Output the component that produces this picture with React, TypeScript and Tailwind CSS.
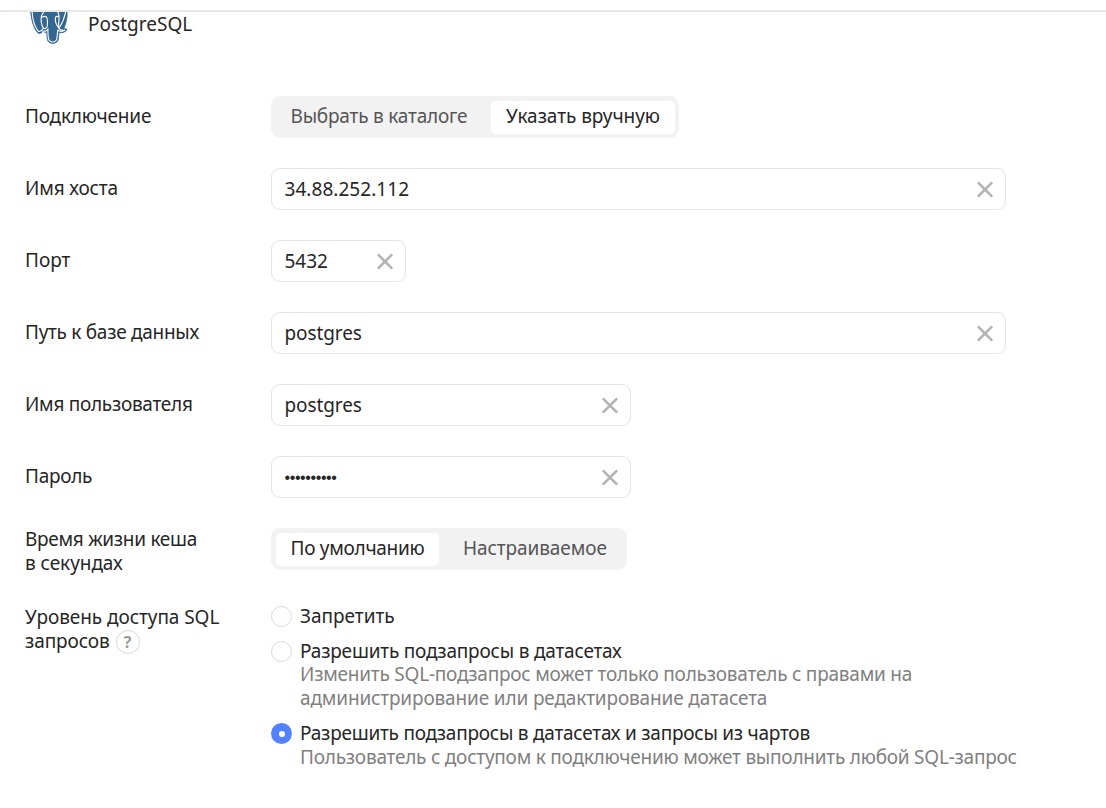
import type { ReactNode } from "react";

function PostgresLogo() {
  return (
    <svg className="block h-[33px] w-[40px] shrink-0" viewBox="0 0 40 33" fill="none" strokeLinecap="round" strokeLinejoin="round">
      <path
        d="M1.8 0C2.2 7 4.6 15.5 7.8 19.8C9.8 22.4 12.2 21.5 13.8 19.5L17.8 20.6C17.9 24 18 27.2 19.2 29.4C21 32.1 27 31.9 28.6 29C29.8 26.8 29.8 23.8 29.8 20.6C32.6 21.2 36.4 20.2 37.8 18C38.2 16.8 36.6 16.6 34.6 16.7C36.8 12.2 38.6 5.5 38 0Z"
        fill="#336791"
        stroke="#336791"
        strokeWidth="0.9"
      />
      <g stroke="#ffffff" strokeWidth="1.1">
        <path d="M3.1 0C3.6 6.8 5.8 14.6 8.6 18.4C10 20.3 11.4 19.5 12.7 18L14.4 16" />
        <path d="M14.6 0C12 3.2 11.8 6 12.2 9.8C12.5 12.8 12.7 14.2 14.6 16.1C16.4 17.7 18.4 15.8 18.4 12.8C18.3 9.8 19 7.4 17.6 5.2C16.6 3.8 14.6 4.4 12.4 5.6" />
        <path d="M12.2 18.6C14.6 19.8 18.4 19.4 19 16.8C18.8 21.6 19 26 20.2 28.4C21.8 30.6 26.2 30.4 27.4 28C28.6 25.3 28 20.5 28.9 17.8C29.8 19.8 33.5 19.8 36 18.1C33.3 18.6 30.9 18.3 30 16.2C32.7 12.2 35.4 6 36.7 0" />
        <path d="M28.8 0C30.6 3.4 30.2 6.8 29.8 9.4C29.4 12 29.6 14.2 30 16.2C27.8 13.4 25.6 9 26.6 5.2C27.5 4 28.8 4.4 30 5.2" />
      </g>
    </svg>
  );
}

function Row({ label, children }: { label: ReactNode; children: ReactNode }) {
  return (
    <div className="flex h-[42px] items-start">
      <div className="w-[246px] shrink-0 whitespace-nowrap">{label}</div>
      {children}
    </div>
  );
}

function Label({ children, className = "" }: { children: ReactNode; className?: string }) {
  return <div className={`pt-2 ${className}`}>{children}</div>;
}

function Field({ value, width, className = "" }: { value: string; width: string; className?: string }) {
  return (
    <div className={`flex h-[42px] items-center justify-between rounded-[9px] border border-[#e5e5e5] pr-[11px] pl-[12.5px] ${width}`}>
      <span className={className}>{value}</span>
      <svg className="h-[17px] w-[17px]" viewBox="0 0 17 17" fill="none" stroke="#b3b3b3" strokeWidth="2.6" strokeLinecap="round">
        <path d="M1.6 2.1 14.4 14.9M14.4 2.1 1.6 14.9" />
      </svg>
    </div>
  );
}

function Segment({ children, active, className }: { children: ReactNode; active?: boolean; className: string }) {
  return (
    <span
      className={`flex h-[33px] shrink-0 items-center rounded-[5px] pb-0.5 ${active ? "bg-white text-[#262626]" : "text-[#555555]"} ${className}`}
    >
      {children}
    </span>
  );
}

function Radio({ checked }: { checked?: boolean }) {
  return checked ? (
    <span className="mt-[2px] flex size-[21px] shrink-0 items-center justify-center rounded-full bg-[#5282ff]">
      <span className="size-[6px] rounded-full bg-white" />
    </span>
  ) : (
    <span className="mt-[2px] size-[21px] shrink-0 rounded-full border border-[#d9d9d9]" />
  );
}

export default function App() {
  return (
    <div className="h-[808px] w-[1106px] overflow-hidden bg-white font-['Noto_Sans','Open_Sans',sans-serif] text-[19px] leading-6 whitespace-nowrap text-[#262626]">
      <div className="h-3 border-b-2 border-[#e8e8e8]" />
      <header className="flex h-[84px] items-start pl-[29px]">
        <PostgresLogo />
        <h1 className="ml-[19px] tracking-[0.02px]">PostgreSQL</h1>
      </header>

      <main className="flex flex-col gap-[30px] pl-[25px]">
        <Row label={<Label className="tracking-[-0.2px]">Подключение</Label>}>
          <div className="flex h-[42px] w-[408px] items-center rounded-[9px] bg-[#f2f2f2] pl-[5px]">
            <Segment className="w-[215px] pl-[14.5px] tracking-[-0.2px]">Выбрать в каталоге</Segment>
            <Segment active className="w-[184px] pl-[15px] tracking-[-0.05px]">Указать вручную</Segment>
          </div>
        </Row>
        <Row label={<Label className="tracking-[-0.15px]">Имя хоста</Label>}>
          <Field value="34.88.252.112" width="w-[735px]" className="tracking-[0.05px]" />
        </Row>
        <Row label={<Label>Порт</Label>}>
          <Field value="5432" width="w-[135px]" />
        </Row>
        <Row label={<Label className="tracking-[-0.28px]">Путь к базе данных</Label>}>
          <Field value="postgres" width="w-[735px]" className="tracking-[-0.1px]" />
        </Row>
        <Row label={<Label className="tracking-[-0.28px]">Имя пользователя</Label>}>
          <Field value="postgres" width="w-[360px]" className="tracking-[-0.1px]" />
        </Row>
        <Row label={<Label className="tracking-[-0.3px]">Пароль</Label>}>
          <Field
            value="••••••••••"
            width="w-[360px]"
            className="pt-0.5 font-['Liberation_Sans',sans-serif] text-[16px] tracking-[-0.4px]"
          />
        </Row>
        <Row
          label={
            <div className="-mt-px">
              <div className="tracking-[-0.28px]">Время жизни кеша</div>
              <div className="tracking-[-0.05px]">в секундах</div>
            </div>
          }
        >
          <div className="flex h-[42px] w-[356px] items-center rounded-[9px] bg-[#f2f2f2] pl-[5px]">
            <Segment active className="w-[163px] pl-[14.5px] tracking-[-0.28px]">По умолчанию</Segment>
            <Segment className="w-[188px] pl-6 tracking-[-0.08px]">Настраиваемое</Segment>
          </div>
        </Row>

        <div className="flex items-start pt-1">
          <div className="w-[246px] shrink-0 pt-px">
            <div className="tracking-[-0.06px]">Уровень доступа SQL</div>
            <div className="flex items-start">
              <span className="tracking-[-0.1px]">запросов</span>
              <span className="mt-px ml-[6px] flex size-6 items-center justify-center rounded-full border-[1.5px] border-[#d9d9d9] text-[16px] font-bold text-[#999999]">
                ?
              </span>
            </div>
          </div>
          <div className="flex flex-col gap-[11px]">
            <div className="flex gap-2">
              <Radio />
              <div>Запретить</div>
            </div>
            <div className="flex gap-2">
              <Radio />
              <div>
                <div className="pt-px leading-[22px] tracking-[-0.2px]">Разрешить подзапросы в датасетах</div>
                <div className="tracking-[-0.22px] text-[#808080]">
                  Изменить SQL-подзапрос может только пользователь с правами на
                </div>
                <div className="tracking-[-0.15px] text-[#808080]">администрирование или редактирование датасета</div>
              </div>
            </div>
            <div className="flex gap-2">
              <Radio checked />
              <div>
                <div className="tracking-[-0.24px]">Разрешить подзапросы в датасетах и запросы из чартов</div>
                <div className="tracking-[-0.23px] text-[#808080]">
                  Пользователь с доступом к подключению может выполнить любой SQL-запрос
                </div>
              </div>
            </div>
          </div>
        </div>
      </main>
    </div>
  );
}
